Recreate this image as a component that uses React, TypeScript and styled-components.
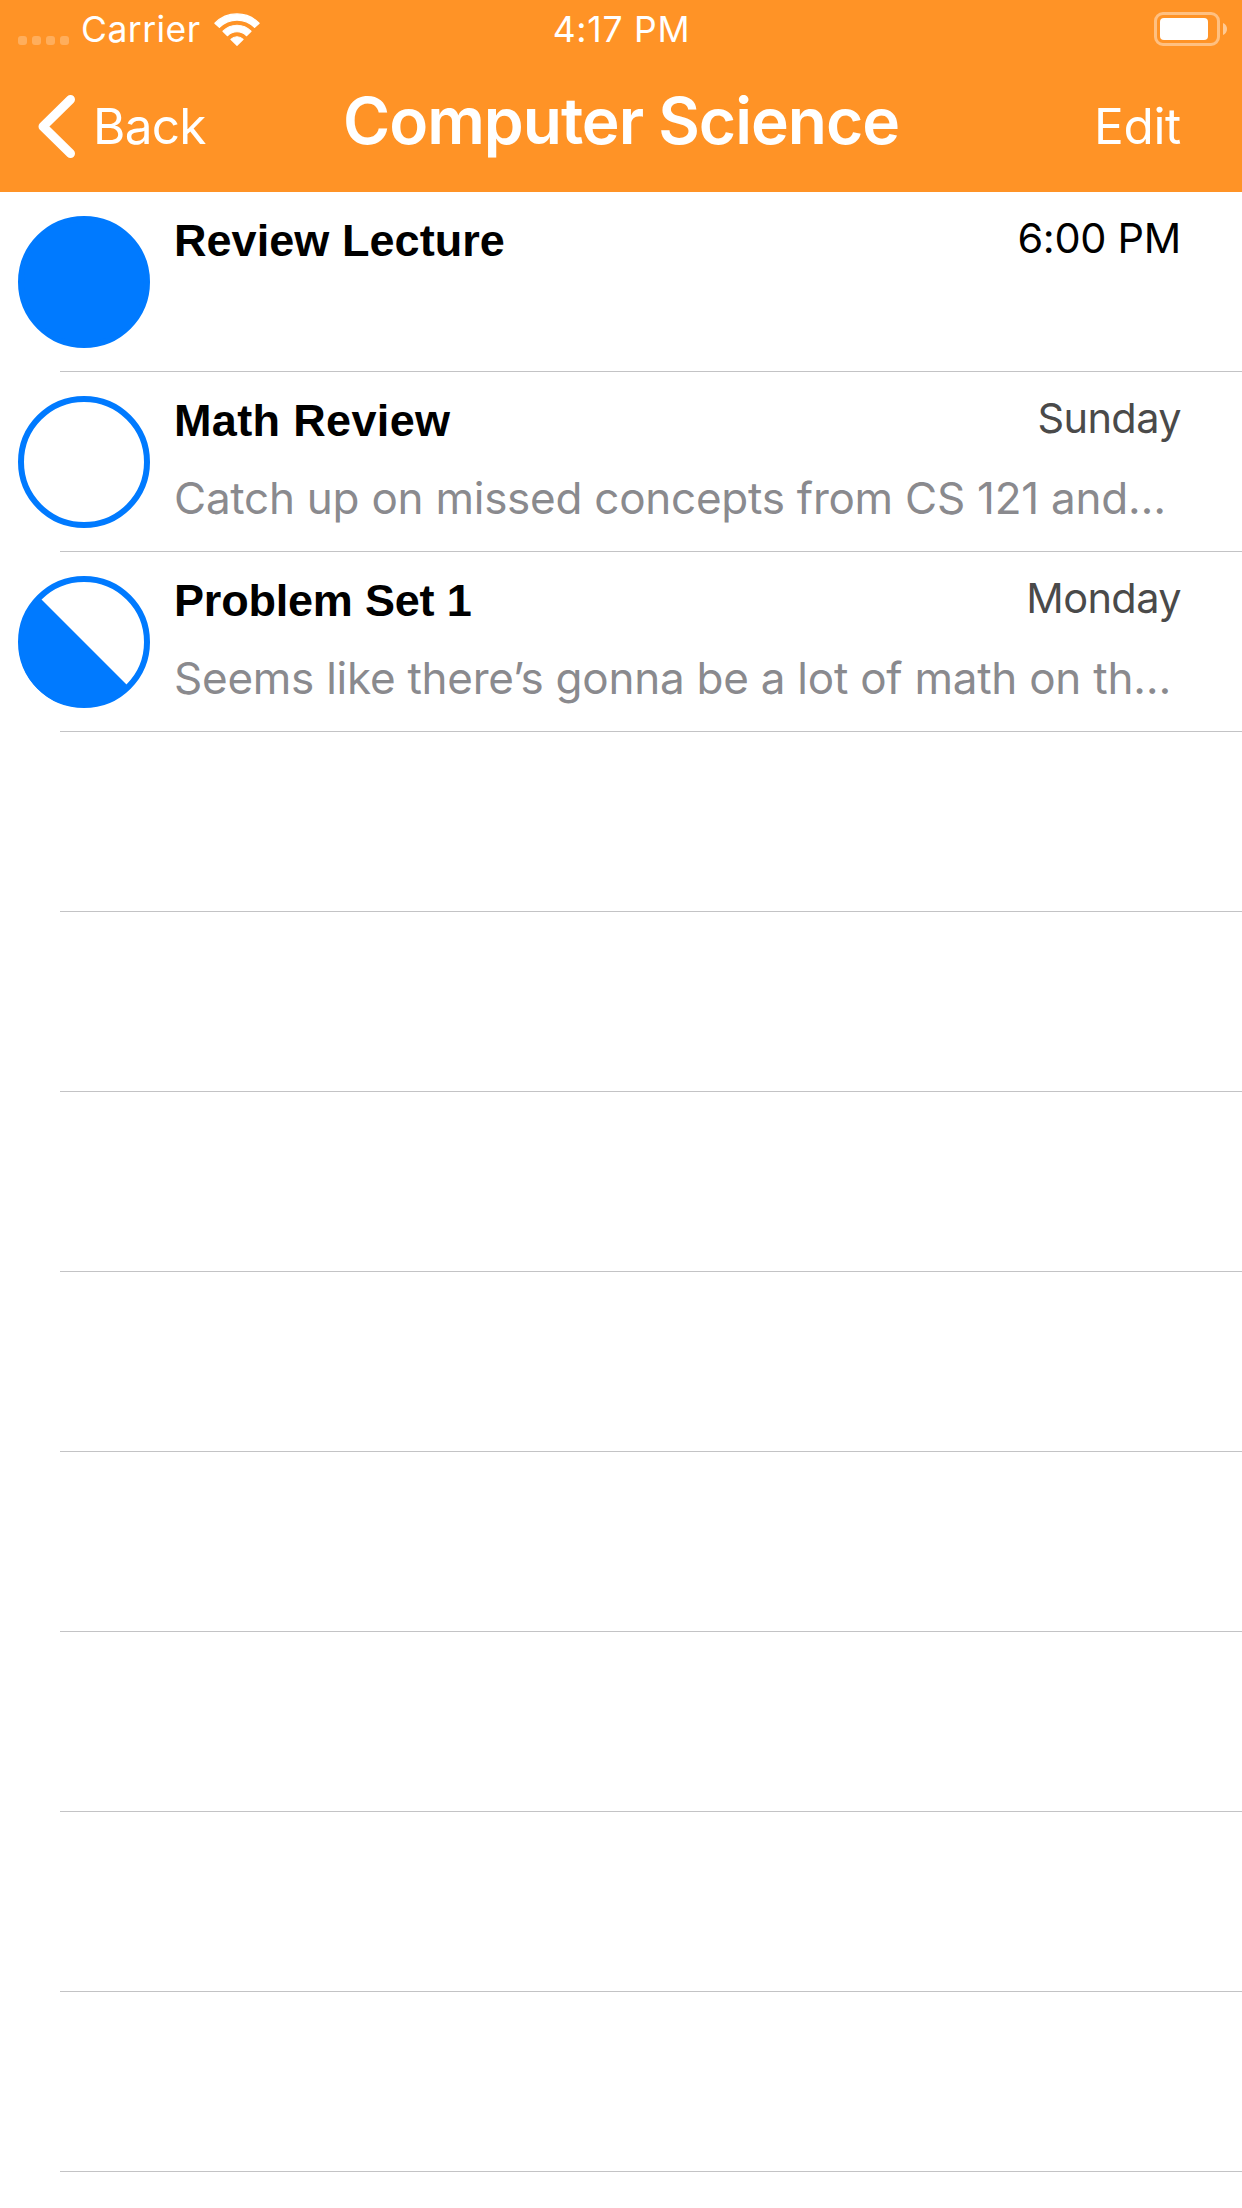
import React from "react";
import styled, { createGlobalStyle } from "styled-components";

const GlobalStyle = createGlobalStyle`
  * { box-sizing: border-box; }
  body {
    margin: 0;
    background: #fff;
    font-family: Inter, Roboto, "Liberation Sans", sans-serif;
  }
`;

const Screen = styled.main`
  width: 1242px;
  height: 2208px;
  overflow: hidden;
  background: #fff;
`;

const Header = styled.header`
  height: 192px;
  background: #ff9326;
  color: #fff;
`;

const StatusBar = styled.div`
  display: grid;
  grid-template-columns: 1fr auto 1fr;
  height: 60px;
  padding: 0 14px 0 18px;
  font-size: 35.5px;
  line-height: 60px;
`;

const Carrier = styled.div`
  display: flex;
  letter-spacing: 0.45px;
`;

const SignalDots = styled.div`
  display: flex;
  gap: 5px;
  margin: 36px 12px 0 0;
`;

const Dot = styled.span`
  width: 9px;
  height: 9px;
  border-radius: 3px;
  background: rgba(255, 255, 255, 0.25);
`;

const WifiIcon = styled.svg`
  width: 48px;
  height: 35px;
  margin: 12px 0 0 12px;
`;

const Clock = styled.time`
  letter-spacing: 0.75px;
  padding-right: 3px;
`;

const Battery = styled.div`
  display: flex;
  align-items: center;
  justify-self: end;
  gap: 3px;
  height: 34px;
  margin-top: 12px;
`;

const BatteryCase = styled.div`
  width: 66px;
  height: 34px;
  padding: 3px;
  border: 3px solid rgba(255, 255, 255, 0.42);
  border-radius: 9px;
`;

const BatteryLevel = styled.div`
  width: 48px;
  height: 22px;
  border-radius: 4px;
  background: #fff;
`;

const BatteryCap = styled.svg`
  width: 5px;
  height: 12px;
`;

const NavBar = styled.nav`
  display: grid;
  grid-template-columns: 1fr auto 1fr;
  height: 132px;
  padding: 0 61px 0 36px;
`;

const NavButton = styled.button<{ $end?: boolean }>`
  display: flex;
  justify-self: ${(p) => (p.$end ? "end" : "start")};
  padding: 0;
  border: 0;
  background: none;
  color: inherit;
  font: 400 49.5px/132px Inter, sans-serif;
  letter-spacing: ${(p) => (p.$end ? -0.3 : -0.7)}px;
`;

const BackIcon = styled.svg`
  width: 42px;
  height: 66px;
  margin: 34px 15px 0 0;
`;

const Title = styled.h1`
  margin: 1px 0 0 25px;
  font-size: 64px;
  font-weight: 600;
  line-height: 120px;
  letter-spacing: -1px;
`;

const List = styled.ul`
  margin: 0;
  padding: 0;
  list-style: none;
`;

const Row = styled.li`
  display: flex;
  height: 180px;
  padding-left: 18px;
  background: linear-gradient(#c3c3c5, #c3c3c5) 60px 179px / 100% 1px no-repeat;
`;

const StatusIcon = styled.svg`
  flex: none;
  width: 132px;
  height: 132px;
  margin-top: 24px;
`;

const Content = styled.div`
  flex: 1;
  min-width: 0;
  padding: 16px 61px 0 24px;
`;

const Heading = styled.div`
  display: flex;
  justify-content: space-between;
  height: 62px;
`;

const Name = styled.h2<{ $spacing: number }>`
  margin: 3px 0 0;
  font: 700 45px/60px "Liberation Sans", sans-serif;
  letter-spacing: ${(p) => p.$spacing}px;
`;

const Due = styled.span<{ $soon?: boolean }>`
  font-size: 41.5px;
  line-height: 60px;
  letter-spacing: ${(p) => (p.$soon ? -0.3 : -0.6)}px;
  color: ${(p) => (p.$soon ? "#000" : "#4a4a4a")};
`;

const Note = styled.p`
  margin: 18px 0 0;
  font-size: 44px;
  line-height: 60px;
  letter-spacing: -0.25px;
  white-space: nowrap;
  color: #8a8a8e;
`;

type Progress = "done" | "open" | "half";

interface Task {
  name: string;
  due: string;
  soon?: boolean;
  note?: string;
  progress: Progress;
  spacing: number;
}

const tasks: Task[] = [
  { name: "Review Lecture", due: "6:00 PM", soon: true, progress: "done", spacing: 0.05 },
  { name: "Math Review", due: "Sunday", note: "Catch up on missed concepts from CS 121 and…", progress: "open", spacing: 0.35 },
  { name: "Problem Set 1", due: "Monday", note: "Seems like there’s gonna be a lot of math on th…", progress: "half", spacing: -0.2 },
];

const EMPTY_ROWS = 8;

function ProgressCircle({ progress }: { progress: Progress }) {
  return (
    <StatusIcon viewBox="0 0 132 132">
      <circle cx="66" cy="66" r="63" fill={progress === "done" ? "#007aff" : "none"} stroke="#007aff" strokeWidth="6" />
      {progress === "half" && <path d="M21.5 21.5A63 63 0 1 0 110.5 110.5Z" fill="#007aff" />}
    </StatusIcon>
  );
}

export default function App() {
  return (
    <Screen>
      <GlobalStyle />
      <Header>
        <StatusBar>
          <Carrier>
            <SignalDots>
              <Dot />
              <Dot />
              <Dot />
              <Dot />
            </SignalDots>
            Carrier
            <WifiIcon viewBox="213 12 48 35" fill="#fff" stroke="#fff" strokeWidth="1.2" strokeLinejoin="round">
              <path d="M214.9 22.9A31 31 0 0 1 259.1 22.9L254.6 27.1A24.8 24.8 0 0 0 219.4 27.1Z" transform="translate(0 .3)" />
              <path d="M223 31.2A19.4 19.4 0 0 1 251 31.2L246.4 35.7A13.2 13.2 0 0 0 227.6 35.7Z" />
              <path d="M230.9 39.3A8.6 8.6 0 0 1 243.1 39.3L237 45.3Z" />
            </WifiIcon>
          </Carrier>
          <Clock>4:17 PM</Clock>
          <Battery>
            <BatteryCase>
              <BatteryLevel />
            </BatteryCase>
            <BatteryCap viewBox="0 0 5 12">
              <path d="M0 0C5.4 2 5.4 10 0 12Z" fill="#fff" fillOpacity=".5" />
            </BatteryCap>
          </Battery>
        </StatusBar>
        <NavBar>
          <NavButton>
            <BackIcon viewBox="36 94 42 66" fill="none" stroke="#fff" strokeWidth="9" strokeLinecap="round" strokeLinejoin="round">
              <path d="M70.5 99.5L43 126.5L70.5 153.5" />
            </BackIcon>
            Back
          </NavButton>
          <Title>Computer Science</Title>
          <NavButton $end>Edit</NavButton>
        </NavBar>
      </Header>
      <List>
        {tasks.map((task) => (
          <Row key={task.name}>
            <ProgressCircle progress={task.progress} />
            <Content>
              <Heading>
                <Name $spacing={task.spacing}>{task.name}</Name>
                <Due $soon={task.soon}>{task.due}</Due>
              </Heading>
              {task.note && <Note>{task.note}</Note>}
            </Content>
          </Row>
        ))}
        {Array.from({ length: EMPTY_ROWS }, (_, i) => (
          <Row key={i} />
        ))}
      </List>
    </Screen>
  );
}
